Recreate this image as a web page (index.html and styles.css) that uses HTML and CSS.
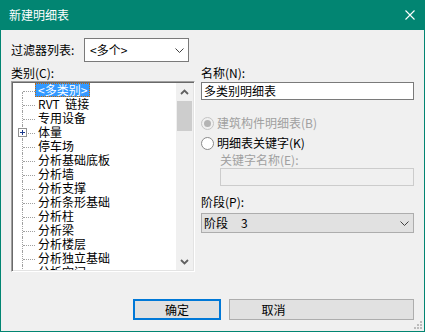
FILE: index.html
```html
<!DOCTYPE html>
<html lang="zh-CN">
<head>
<meta charset="utf-8">
<title>新建明细表</title>
<link rel="stylesheet" href="styles.css">
</head>
<body>
<div class="window">
  <header class="titlebar">
    <span class="title">新建明细表</span>
    <svg class="close" width="10" height="10" viewBox="0 0 10 10"><path d="M0.5 0.5 L9.5 9.5 M9.5 0.5 L0.5 9.5" stroke="#ffffff" stroke-width="1.1" fill="none"/></svg>
  </header>
  <main class="content">
    <div class="filter-row">
      <span class="filter-label">过滤器列表:</span>
      <div class="combo combo-filter">
        <span class="combo-text">&lt;多个&gt;</span>
        <svg class="chev" width="9" height="5" viewBox="0 0 9 5"><path d="M0.5 0.5 L4.5 4.5 L8.5 0.5" stroke="#404040" stroke-width="1" fill="none"/></svg>
      </div>
    </div>
    <div class="columns">
      <section class="left">
        <div class="label">类别(C):</div>
        <div class="listbox">
          <div class="tree">
            <div class="row"><span class="twig first"></span><span class="item selected">&lt;多类别&gt;</span></div>
            <div class="row"><span class="twig"></span><span class="item">RVT&nbsp; 链接</span></div>
            <div class="row"><span class="twig"></span><span class="item">专用设备</span></div>
            <div class="row"><span class="twig"><svg class="plus" width="9" height="9" viewBox="0 0 9 9"><rect x="0.5" y="0.5" width="8" height="8" fill="#ffffff" stroke="#919191"/><path d="M2 4.5 H7 M4.5 2 V7" stroke="#1c3a8c" stroke-width="1"/></svg></span><span class="item">体量</span></div>
            <div class="row"><span class="twig"></span><span class="item">停车场</span></div>
            <div class="row"><span class="twig"></span><span class="item">分析基础底板</span></div>
            <div class="row"><span class="twig"></span><span class="item">分析墙</span></div>
            <div class="row"><span class="twig"></span><span class="item">分析支撑</span></div>
            <div class="row"><span class="twig"></span><span class="item">分析条形基础</span></div>
            <div class="row"><span class="twig"></span><span class="item">分析柱</span></div>
            <div class="row"><span class="twig"></span><span class="item">分析梁</span></div>
            <div class="row"><span class="twig"></span><span class="item">分析楼层</span></div>
            <div class="row"><span class="twig"></span><span class="item">分析独立基础</span></div>
            <div class="row"><span class="twig"></span><span class="item">分析空间</span></div>
          </div>
          <div class="scrollbar">
            <div class="sb-btn"><svg width="9" height="6" viewBox="0 0 9 6"><path d="M1 5 L4.5 1.5 L8 5" stroke="#606060" stroke-width="1.8" fill="none"/></svg></div>
            <div class="sb-thumb"></div>
            <div class="sb-track"></div>
            <div class="sb-btn"><svg width="9" height="6" viewBox="0 0 9 6"><path d="M1 1 L4.5 4.5 L8 1" stroke="#606060" stroke-width="1.8" fill="none"/></svg></div>
          </div>
        </div>
      </section>
      <section class="right">
        <div class="label">名称(N):</div>
        <div class="textbox">多类别明细表</div>
        <div class="radio-row disabled first-radio">
          <span class="radio checked"><span class="dot"></span></span>
          <span>建筑构件明细表(B)</span>
        </div>
        <div class="radio-row">
          <span class="radio"></span>
          <span>明细表关键字(K)</span>
        </div>
        <div class="sub-label disabled">关键字名称(E):</div>
        <div class="textbox textbox-disabled"></div>
        <div class="label stage-label">阶段(P):</div>
        <div class="combo combo-stage">
          <span class="combo-text">阶段<span class="stage-num">3</span></span>
          <svg class="chev" width="9" height="5" viewBox="0 0 9 5"><path d="M0.5 0.5 L4.5 4.5 L8.5 0.5" stroke="#404040" stroke-width="1" fill="none"/></svg>
        </div>
      </section>
    </div>
    <div class="buttons">
      <button class="btn btn-default" type="button">确定</button>
      <button class="btn btn-cancel" type="button"><span class="btn-inner">取消</span></button>
    </div>
  </main>
  <svg class="grip" width="9" height="9" viewBox="0 0 9 9">
    <rect x="6" y="0" width="2" height="2" fill="#bcbcbc"/>
    <rect x="3" y="3" width="2" height="2" fill="#bcbcbc"/>
    <rect x="6" y="3" width="2" height="2" fill="#bcbcbc"/>
    <rect x="0" y="6" width="2" height="2" fill="#bcbcbc"/>
    <rect x="3" y="6" width="2" height="2" fill="#bcbcbc"/>
    <rect x="6" y="6" width="2" height="2" fill="#bcbcbc"/>
  </svg>
</div>
</body>
</html>
```
FILE: styles.css
```css
* {
  box-sizing: border-box;
}

html, body {
  margin: 0;
  padding: 0;
  background: #f0f0f0;
}

body {
  font-family: "Noto Sans CJK SC", "Noto Sans", sans-serif;
  font-size: 12px;
  color: #000000;
}

.window {
  position: relative;
  width: 425px;
  height: 332px;
  background: #f0f0f0;
  border: 1px solid #028572;
  border-top: 0;
  display: flex;
  flex-direction: column;
  overflow: hidden;
}

.titlebar {
  height: 30px;
  flex: none;
  background: #028572;
  color: #ffffff;
  display: flex;
  align-items: center;
  justify-content: space-between;
  padding: 0 9px 0 8px;
}

.title {
  font-size: 12px;
  line-height: 14px;
}

.close {
  display: block;
}

.content {
  padding: 8px 10px 0 10px;
  display: flex;
  flex-direction: column;
}

.filter-row {
  display: flex;
  align-items: center;
  height: 24px;
}

.filter-label {
  width: 73px;
  line-height: 14px;
}

.combo {
  display: flex;
  align-items: center;
  justify-content: space-between;
}

.combo-filter {
  width: 105px;
  height: 24px;
  background: #ffffff;
  border: 1px solid #7a7a7a;
  padding: 0 4px 0 5px;
}

.combo-text {
  line-height: 14px;
}

.stage-num {
  margin-left: 13px;
}

.chev {
  display: block;
}

.columns {
  margin-top: 4px;
  display: flex;
  gap: 6px;
}

.left {
  width: 184px;
  display: flex;
  flex-direction: column;
}

.right {
  width: 213px;
  display: flex;
  flex-direction: column;
}

.label {
  height: 15px;
  line-height: 13px;
}

.listbox {
  height: 191px;
  display: flex;
  background: #ffffff;
  border: 1px solid;
  border-color: #a0a0a0 #ffffff #ffffff #a0a0a0;
  box-shadow: inset 1px 1px 0 #696969, inset -1px -1px 0 #e3e3e3;
  padding: 1px;
}

.tree {
  flex: 1;
  overflow: hidden;
}

.row {
  height: 14px;
  display: flex;
  align-items: stretch;
}

.twig {
  position: relative;
  flex: none;
  width: 13px;
  height: 14px;
  margin-left: 9px;
  border-left: 1px dotted #a0a0a0;
}

.twig::before {
  content: "";
  display: block;
  height: 8px;
  border-bottom: 1px dotted #a0a0a0;
}

.twig.first {
  border-left: 0;
  padding-left: 1px;
}

.twig.first::after {
  content: "";
  display: block;
  height: 6px;
  margin-left: -1px;
  border-left: 1px dotted #a0a0a0;
}

.plus {
  position: absolute;
  left: -5px;
  top: 3px;
  display: block;
}

.item {
  line-height: 12px;
  padding: 0 2px;
  border: 1px solid transparent;
  white-space: nowrap;
}

.item.selected {
  background: #3399ff;
  color: #ffffff;
  border: 1px dotted #cc6600;
}

.scrollbar {
  width: 17px;
  flex: none;
  background: #f0f0f0;
  display: flex;
  flex-direction: column;
}

.sb-btn {
  height: 17px;
  flex: none;
  display: flex;
  align-items: center;
  justify-content: center;
}

.sb-thumb {
  height: 30px;
  margin: 1px 1px 0 1px;
  background: #cdcdcd;
}

.sb-track {
  flex: 1;
}

.textbox {
  margin-top: 1px;
  height: 18px;
  background: #ffffff;
  border: 1px solid #7a7a7a;
  line-height: 14px;
  padding: 1px 2px;
}

.textbox-disabled {
  margin-left: 19px;
  background: #f0f0f0;
  border-color: #cccccc;
}

.radio-row {
  height: 20px;
  display: flex;
  align-items: center;
  gap: 3px;
  line-height: 14px;
}

.first-radio {
  margin-top: 13px;
}

.radio {
  width: 13px;
  height: 13px;
  border-radius: 50%;
  border: 1px solid #8a8a8a;
  background: #ffffff;
  display: flex;
  align-items: center;
  justify-content: center;
  flex: none;
}

.radio.checked {
  border-color: #c4c4c4;
  background: #f0f0f0;
}

.dot {
  width: 7px;
  height: 7px;
  border-radius: 50%;
  background: #b4b4b4;
}

.disabled {
  color: #a0a0a0;
}

.sub-label {
  height: 14px;
  line-height: 14px;
  padding-left: 19px;
}

.stage-label {
  margin-top: 9px;
  height: 14px;
  line-height: 14px;
}

.combo-stage {
  margin-top: 4px;
  height: 20px;
  background: #e1e1e1;
  border: 1px solid #adadad;
  padding: 0 4px 0 2px;
}

.buttons {
  margin-top: 27px;
  display: flex;
  gap: 8px;
  padding-left: 122px;
}

.btn {
  height: 21px;
  margin: 0;
  padding: 0;
  font-family: inherit;
  font-size: 12px;
  line-height: 14px;
  color: #000000;
  background: #e1e1e1;
  border: 1px solid #adadad;
  border-radius: 0;
}

.btn-default {
  width: 88px;
  border: 2px solid #0078d7;
}

.btn-cancel {
  width: 185px;
  text-align: left;
}

.btn-inner {
  display: inline-block;
  width: 87px;
  text-align: center;
}

.grip {
  position: absolute;
  right: 1px;
  bottom: 1px;
  display: block;
}
```
